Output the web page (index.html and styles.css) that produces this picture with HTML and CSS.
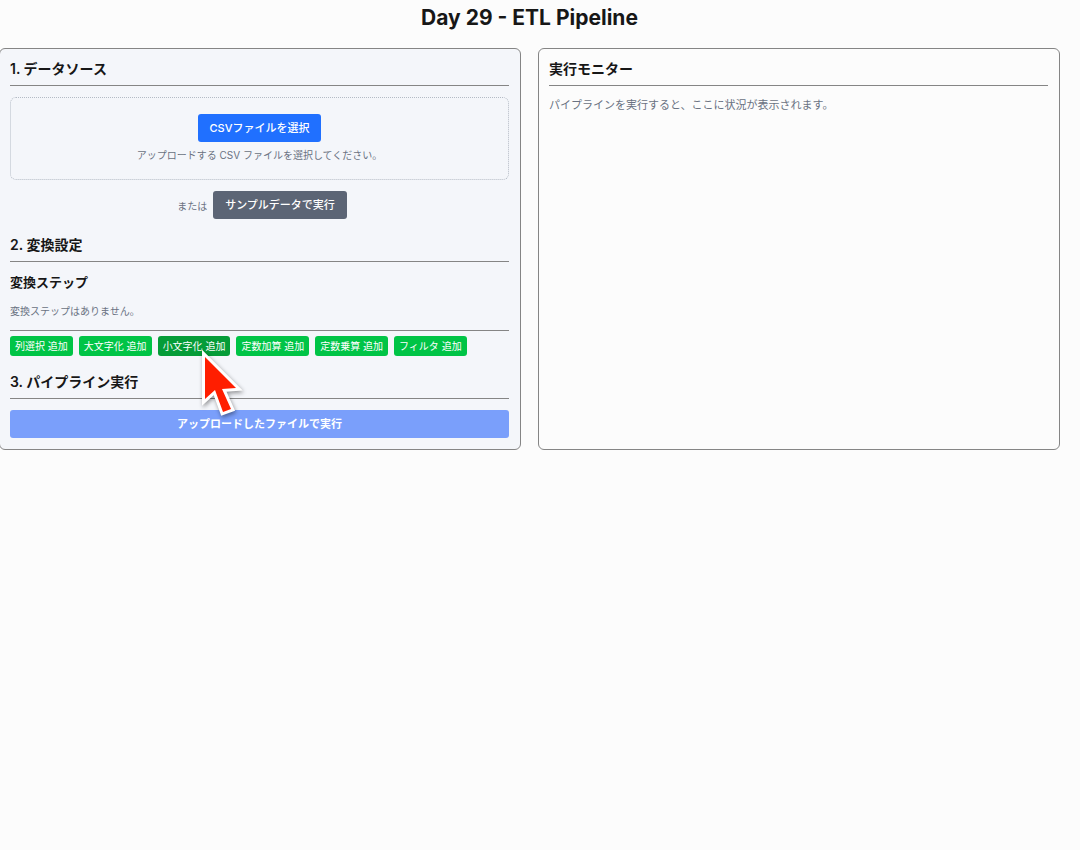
FILE: index.html
```
<!DOCTYPE html>
<html lang="ja">
<head>
    <meta charset="UTF-8">
    <meta name="viewport" content="width=device-width, initial-scale=1.0">
    <title>Day 29 - ETL Pipeline</title>
    <link rel="stylesheet" href="styles.css">
</head>
<body>
    <h1>Day 29 - ETL Pipeline</h1>
    <main class="container">
        <div class="panel settings">
            <section>
                <h2>1. データソース</h2>
                <div class="upload-box">
                    <input type="file" id="csvFile" accept=".csv" aria-label="CSVファイル" hidden>
                    <button type="button" class="btn btn-primary" id="selectFile">CSVファイルを選択</button>
                    <p class="hint">アップロードする CSV ファイルを選択してください。</p>
                </div>
                <div class="sample-row">
                    <span>または</span>
                    <button type="button" class="btn btn-secondary">サンプルデータで実行</button>
                </div>
            </section>

            <section>
                <h2>2. 変換設定</h2>
                <h3>変換ステップ</h3>
                <p class="empty">変換ステップはありません。</p>
                <div class="step-buttons">
                    <button type="button" class="btn-step">列選択 追加</button>
                    <button type="button" class="btn-step">大文字化 追加</button>
                    <div class="step-item">
                        <button type="button" class="btn-step active">小文字化 追加</button>
                        <svg class="cursor" width="50" height="72" viewBox="0 0 50 72" aria-hidden="true">
                            <polygon points="4,9 4,51 14,42 22,64 30,61 21,41 35,40" />
                        </svg>
                    </div>
                    <button type="button" class="btn-step">定数加算 追加</button>
                    <button type="button" class="btn-step">定数乗算 追加</button>
                    <button type="button" class="btn-step">フィルタ 追加</button>
                </div>
            </section>

            <section>
                <h2>3. パイプライン実行</h2>
                <button type="button" class="btn btn-run" id="runButton" disabled>アップロードしたファイルで実行</button>
            </section>
        </div>

        <section class="panel">
            <h2>実行モニター</h2>
            <p class="status">パイプラインを実行すると、ここに状況が表示されます。</p>
        </section>
    </main>

    <script>
        const csvFile = document.getElementById("csvFile");

        document.getElementById("selectFile").addEventListener("click", function() {
            csvFile.click();
        });

        csvFile.addEventListener("change", function() {
            document.getElementById("runButton").disabled = csvFile.files.length === 0;
        });
    </script>
</body>
</html>
```
FILE: styles.css
```
* {
    box-sizing: border-box;
}
body {
    font-family: Inter, "Noto Sans CJK JP", sans-serif;
    font-size: 11px;
    margin: 0 20px 0 -1px;
    color: #171717;
    background-color: #fcfcfc;
}
h1, h2, h3, p {
    margin: 0;
}
h1 {
    font-size: 21px;
    line-height: 36px;
    margin-bottom: 12px;
    text-align: center;
}
h2 {
    font-size: 14px;
    font-weight: 600;
    line-height: 20px;
    padding-bottom: 6px;
    margin-bottom: 11px;
    border-bottom: 1px solid #858585;
}
h3 {
    font-size: 13px;
    font-weight: 600;
    line-height: 18px;
    margin-bottom: 13px;
}
button {
    font-family: inherit;
    border: none;
    border-radius: 3px;
    color: white;
    cursor: pointer;
}
.container {
    display: grid;
    grid-template-columns: 1fr 1fr;
    gap: 17px;
}
.panel {
    padding: 10px 11px 11px 10px;
    border: 1px solid #858585;
    border-radius: 6px;
}
.settings {
    display: flex;
    flex-direction: column;
    gap: 16px;
    background-color: #f4f6fa;
}
.upload-box {
    padding: 16px;
    border: 1px dotted #b4bbc5;
    border-radius: 6px;
    text-align: center;
}
.btn {
    height: 28px;
    padding: 0 12px 2px;
    font-size: 11px;
    font-weight: 500;
}
.btn-primary {
    background-color: #2070ff;
}
.btn-secondary {
    background-color: #5c6575;
}
.hint {
    margin-top: 5px;
    font-size: 10px;
    line-height: 16px;
    color: #6a7282;
}
.sample-row {
    display: flex;
    justify-content: center;
    align-items: center;
    gap: 6px;
    margin-top: 11px;
    padding-left: 5px;
    font-size: 10px;
    color: #6a7282;
}
.empty {
    margin-bottom: 12px;
    font-size: 10px;
    line-height: 14px;
    color: #6a7282;
}
.step-buttons {
    display: flex;
    flex-wrap: wrap;
    gap: 6px;
    padding-top: 5px;
    border-top: 1px solid #858585;
}
.step-item {
    position: relative;
}
.btn-step {
    display: block;
    height: 20px;
    padding: 0 5px 2px;
    font-size: 10px;
    background-color: #00c446;
}
.btn-step:hover, .btn-step.active {
    background-color: #059c38;
}
.cursor {
    position: absolute;
    left: 43px;
    top: 12px;
    overflow: visible;
    pointer-events: none;
    filter: drop-shadow(1px 2px 2px rgba(0, 0, 0, 0.4));
}
.cursor polygon {
    fill: #ff1e00;
    stroke: white;
    stroke-width: 6px;
    stroke-miterlimit: 6;
    paint-order: stroke;
}
.btn-run {
    display: block;
    width: 100%;
    font-weight: 600;
    background-color: #2070ff;
}
.btn-run:disabled {
    background-color: #7a9ffb;
    cursor: not-allowed;
}
.status {
    line-height: 16px;
    color: #6a7282;
}
```
